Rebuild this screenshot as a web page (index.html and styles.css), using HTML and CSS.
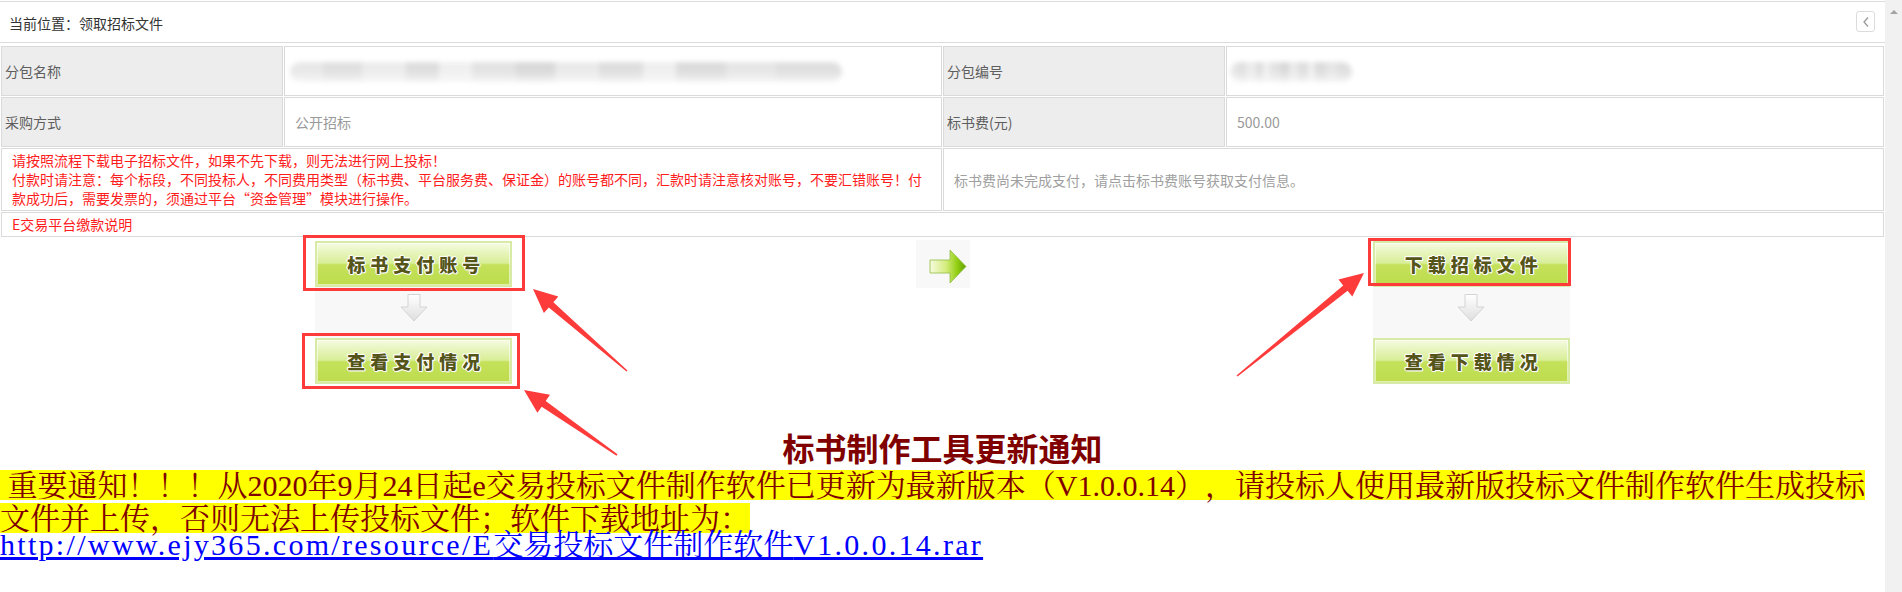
FILE: index.html
```html
<!DOCTYPE html>
<html lang="zh-CN">
<head>
    <meta charset="UTF-8">
    <meta name="viewport" content="width=device-width, initial-scale=1.0">
    <title>领取招标文件</title>
    <link rel="stylesheet" href="styles.css">
</head>
<body>
    <div class="page">
        <!-- breadcrumb bar -->
        <div class="crumb">
            <span class="crumb-text">当前位置：领取招标文件</span>
            <span class="crumb-toggle">
                <svg width="8" height="12" viewBox="0 0 8 12"><path d="M6 1.5 L2 6 L6 10.5" fill="none" stroke="#9a9a9a" stroke-width="1.3"/></svg>
            </span>
        </div>

        <!-- package info -->
        <table class="info">
            <colgroup>
                <col class="col-label">
                <col class="col-value">
                <col class="col-label">
                <col class="col-value">
            </colgroup>
            <tr class="row-field">
                <td class="label">分包名称</td>
                <td class="value"><span class="masked masked-name"></span></td>
                <td class="label">分包编号</td>
                <td class="value"><span class="masked masked-code"></span></td>
            </tr>
            <tr class="row-field">
                <td class="label">采购方式</td>
                <td class="value">公开招标</td>
                <td class="label">标书费(元)</td>
                <td class="value">500.00</td>
            </tr>
            <tr>
                <td colspan="2" class="notice">请按照流程下载电子招标文件，如果不先下载，则无法进行网上投标！<br>付款时请注意：每个标段，不同投标人，不同费用类型（标书费、平台服务费、保证金）的账号都不同，汇款时请注意核对账号，不要汇错账号！付款成功后，需要发票的，须通过平台“资金管理”模块进行操作。</td>
                <td colspan="2" class="pay-state">标书费尚未完成支付，请点击标书费账号获取支付信息。</td>
            </tr>
            <tr>
                <td colspan="4" class="notice notice-single">E交易平台缴款说明</td>
            </tr>
        </table>

        <!-- steps -->
        <div class="flow">
            <div class="flow-col">
                <a class="step-btn" href="#">标书支付账号</a>
                <div class="step-down">
                    <svg width="28" height="28" viewBox="0 0 28 28">
                        <defs><linearGradient id="down1" x1="0" y1="0" x2="0" y2="1"><stop offset="0" stop-color="#ffffff"/><stop offset="1" stop-color="#dedede"/></linearGradient></defs>
                        <polygon points="8,0.5 20,0.5 20,13 27,13 14,27 1,13 8,13" fill="url(#down1)" stroke="#d4d4d4"/>
                    </svg>
                </div>
                <a class="step-btn" href="#">查看支付情况</a>
            </div>

            <div class="flow-next">
                <svg width="54" height="48" viewBox="0 0 54 48">
                    <defs><linearGradient id="next" x1="0" y1="0" x2="1" y2="0"><stop offset="0" stop-color="#f6fbdf"/><stop offset="0.45" stop-color="#d4ec7c"/><stop offset="0.75" stop-color="#93cf14"/><stop offset="1" stop-color="#5f9f00"/></linearGradient></defs>
                    <polygon points="14,20 34,20 34,10 50,26.5 34,43 34,33 14,33" fill="url(#next)" stroke="#8fbd42" stroke-width="0.8"/>
                </svg>
            </div>

            <div class="flow-col">
                <a class="step-btn" href="#">下载招标文件</a>
                <div class="step-down">
                    <svg width="28" height="28" viewBox="0 0 28 28">
                        <defs><linearGradient id="down2" x1="0" y1="0" x2="0" y2="1"><stop offset="0" stop-color="#ffffff"/><stop offset="1" stop-color="#dedede"/></linearGradient></defs>
                        <polygon points="8,0.5 20,0.5 20,13 27,13 14,27 1,13 8,13" fill="url(#down2)" stroke="#d4d4d4"/>
                    </svg>
                </div>
                <a class="step-btn" href="#">查看下载情况</a>
            </div>
        </div>

        <!-- bulletin -->
        <div class="bulletin">
            <h2 class="bulletin-title">标书制作工具更新通知</h2>
            <p class="bulletin-text"><span class="mark">&nbsp;重要通知！！！从2020年9月24日起e交易投标文件制作软件已更新为最新版本（V1.0.0.14），请投标人使用最新版投标文件制作软件生成投标文件并上传，否则无法上传投标文件；软件下载地址为：</span></p>
            <a class="bulletin-link" href="#"><span class="latin">http://www.ejy365.com/resource/E</span>交易投标文件制作软件<span class="latin">V1.0.0.14.rar</span></a>
        </div>

        <!-- screenshot markup drawn over the page -->
        <svg class="annotations" width="1885" height="592" viewBox="0 0 1885 592">
            <g fill="none" stroke="#fd3b3b" stroke-width="3">
                <rect x="304.5" y="236.5" width="219" height="53"/>
                <rect x="303.5" y="334.5" width="215" height="53"/>
                <rect x="1369.5" y="239.5" width="200" height="45"/>
            </g>
            <g fill="#fd3b3b">
                <polygon points="627.5,370.4 553.4,302.2 558.3,296.5 533,289 543.9,313.1 548.8,307.4 626.5,371.6"/>
                <polygon points="617.5,454.3 545.7,400.9 550,394.8 524,390 537.4,412.8 541.7,406.7 616.5,455.7"/>
                <polygon points="1237.5,376.6 1347.6,290.8 1352.3,296.6 1364,273 1338.5,279.6 1343.2,285.4 1236.5,375.4"/>
            </g>
        </svg>
    </div>

    <div class="scrollbar"><span class="scroll-up"></span></div>
</body>
</html>
```

FILE: styles.css
```css
/* page frame */
body {
    margin: 0;
    height: 592px;
    overflow: hidden;
    display: flex;
    font-family: "Noto Sans CJK SC", "Microsoft YaHei", sans-serif;
    font-size: 14px;
    color: #333;
    background: #fff;
    text-spacing-trim: space-all;
}

.page {
    flex: 1;
    min-width: 0;
    position: relative;
}

.scrollbar {
    width: 17px;
    background-color: #f1f1f1;
}

.scroll-up {
    display: block;
    width: 0;
    height: 0;
    margin: 10px auto 0;
    border-left: 4px solid transparent;
    border-right: 4px solid transparent;
    border-bottom: 4px solid #a3a3a3;
}

/* breadcrumb */
.crumb {
    margin-top: 1px;
    height: 38px;
    padding: 2px 10px 0 9px;
    border-top: 1px solid #dcdcdc;
    border-bottom: 1px solid #dcdcdc;
    display: flex;
    justify-content: space-between;
    align-items: flex-start;
}

.crumb-text {
    line-height: 38px;
}

.crumb-toggle {
    margin-top: 7px;
    width: 17px;
    height: 19px;
    border: 1px solid #dcdcdc;
    border-radius: 3px;
    display: flex;
    align-items: center;
    justify-content: center;
}

/* info table */
.info {
    width: 100%;
    margin-top: 2px;
    table-layout: fixed;
    border-spacing: 1px;
}

.col-label {
    width: 15%;
}

.col-value {
    width: 35%;
}

.info td {
    border: 1px solid #dadada;
    padding: 0 10px;
    vertical-align: middle;
}

.row-field {
    height: 50px;
}

.info .label {
    background-color: #ededed;
    color: #5e5e5e;
    padding-left: 3px;
}

.info .value {
    color: #999;
}

.masked {
    display: inline-block;
    vertical-align: middle;
    height: 20px;
    border-radius: 10px;
    filter: blur(2.5px);
    background:
        linear-gradient(to bottom, rgba(255, 255, 255, 0) 45%, rgba(250, 250, 250, 0.8)),
        linear-gradient(90deg, #e8e8e8 0 6%, #e0e0e0 6% 13%, #ececec 13% 21%, #dedede 21% 27%, #f0f0f0 27% 33%, #e3e3e3 33% 41%, #d9d9d9 41% 48%, #eaeaea 48% 56%, #dedede 56% 64%, #efefef 64% 70%, #dcdcdc 70% 79%, #e6e6e6 79% 88%, #dfdfdf 88%);
}

.masked-name {
    width: 552px;
    margin-left: -5px;
}

.masked-code {
    width: 122px;
    margin-left: -7px;
}

.info .notice {
    color: #ff1c1c;
    line-height: 19px;
    padding: 2px 10px;
}

.info .notice-single {
    line-height: 23px;
    padding: 0 10px;
}

.info .pay-state {
    color: #a0a0a0;
}

/* step buttons */
.flow {
    display: grid;
    grid-template-columns: 1fr 230px 1fr;
    margin-top: 3px;
}

.flow-col {
    justify-self: center;
    width: 197px;
}

.step-btn {
    display: block;
    box-sizing: border-box;
    height: 46px;
    border: 2px solid #d8eba6;
    box-shadow: inset 0 0 0 1px rgba(255, 255, 255, 0.55);
    background: linear-gradient(to bottom, #f5fbe2 0%, #e6f4b9 25%, #d8ee97 48%, #c4e15a 52%, #bedc4d 100%);
    color: #55551a;
    font-size: 18px;
    font-weight: 900;
    letter-spacing: 5px;
    padding-left: 5px;
    line-height: 42px;
    text-align: center;
    text-decoration: none;
    text-shadow: 1px 0 0 #fff, -1px 0 0 #fff, 0 1px 0 #fff, 0 -1px 0 #fff, 1px 1px 1px #fff, -1px -1px 1px #fff;
}

.step-down {
    height: 51px;
    box-sizing: border-box;
    padding-top: 7px;
    background-color: #f8f8f8;
    display: flex;
    justify-content: center;
    align-items: flex-start;
}

.flow-next {
    justify-self: center;
    width: 54px;
    height: 48px;
    margin-top: -1px;
    background-color: #f8f8f8;
}

.flow-next svg {
    display: block;
}

/* bulletin */
.bulletin {
    margin-top: 45px;
}

.bulletin-title {
    margin: 0;
    text-align: center;
    font-size: 32px;
    line-height: 36px;
    font-weight: 700;
    color: #800000;
}

.bulletin-text {
    margin: 4px 0 0;
    font-family: "Liberation Serif", "Noto Serif CJK SC", "Noto Sans CJK SC", serif;
    font-size: 30px;
    line-height: 33px;
    color: #800000;
}

.mark {
    background: linear-gradient(#ffff00, #ffff00) 0 1px / 100% 30px no-repeat;
}

.bulletin-link {
    display: block;
    font-family: "Liberation Serif", "Noto Serif CJK SC", "Noto Sans CJK SC", serif;
    font-size: 30px;
    line-height: 20px;
    color: #0000ff;
}

.bulletin-link .latin {
    letter-spacing: 2.3px;
}

/* markup layer */
.annotations {
    position: absolute;
    left: 0;
    top: 0;
    pointer-events: none;
}
```
